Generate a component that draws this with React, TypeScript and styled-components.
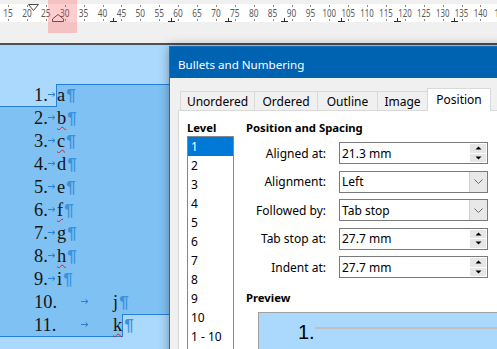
import React from 'react';
import styled, { createGlobalStyle } from 'styled-components';

const UI = `"Noto Sans", "Open Sans", sans-serif`;

const Global = createGlobalStyle`
  html, body { margin: 0; padding: 0; overflow: hidden; background: #aad9fd; }
  #root { width: 497px; height: 349px; }
`;

const Screen = styled.div`
  position: relative;
  width: 497px;
  height: 349px;
  overflow: hidden;
  display: flex;
  flex-direction: column;
  background: #aad9fd;
`;

/* ---------- Ruler ---------- */
const RulerBar = styled.div`
  position: relative;
  flex: none;
  height: 43px;
  box-sizing: border-box;
  padding-top: 4px;
  background: #f0f0f0;
`;
const RulerScale = styled.svg`
  display: block;
  width: 497px;
  height: 18px;
  background: #ffffff;
`;
const RulerHighlight = styled.div`
  position: absolute;
  left: 48px;
  top: 0;
  width: 29px;
  height: 33px;
  background: rgba(255, 70, 70, 0.27);
`;
const Divider = styled.div`
  flex: none;
  height: 2px;
  background: #4b5259;
`;

const unit = 18.9; // px per 5 mm
const numX = (mm: number) => 8 + ((mm - 15) / 5) * unit;
const marks = Array.from({ length: 26 }, (_, i) => 15 + i * 5);
const tabStops = [113, 170.5, 227.5, 284, 340.5, 397, 454];

function Ruler() {
  return (
    <RulerBar>
      <RulerScale viewBox="0 0 497 18">
        {marks.map((mm) => (
          <g key={mm}>
            <rect x={Math.round(numX(mm))} y={1} width={1} height={2} fill="#8a8a8a" />
            <rect x={Math.round(numX(mm))} y={15} width={1} height={2} fill="#8a8a8a" />
            <text
              x={numX(mm)}
              y={13}
              textAnchor="middle"
              fontFamily={UI}
              fontSize="10.5"
              fill="#595959"
              textLength={mm >= 100 ? 13.5 : 9.5}
              lengthAdjust="spacingAndGlyphs"
            >
              {mm}
            </text>
          </g>
        ))}
        <text x={494} y={13} fontFamily={UI} fontSize="10.5" fill="#595959">1</text>
        {tabStops.map((x) => (
          <g key={x} fill="#2b2b2b">
            <rect x={Math.round(x)} y={14} width={1} height={3} />
            <rect x={Math.round(x) - 3} y={17} width={7} height={1} />
          </g>
        ))}
        <polygon points="28.5,0.5 38.5,0.5 33.5,6.5" fill="#ffffff" stroke="#4a4a4a" strokeWidth="1" />
        <polygon points="58,10.5 52.5,15 52.5,17.5 63.5,17.5 63.5,15" fill="none" stroke="#4a4a4a" strokeWidth="1" />
      </RulerScale>
      <RulerHighlight />
    </RulerBar>
  );
}

/* ---------- Document ---------- */
const Doc = styled.div`
  flex: 1;
  padding-top: 39px;
  font-family: "Liberation Serif", "Times New Roman", serif;
  font-size: 18.4px;
  color: #141414;
`;
const Line = styled.div`
  display: flex;
  height: 23px;
  line-height: 23px;
  white-space: nowrap;
`;
const edgeShadow: Record<string, string> = {
  none: 'none',
  top: 'inset 0 1px 0 #2780d8',
  bottom: 'inset 0 -1px 0 #2780d8',
  topLeft: 'inset 1px 1px 0 #2780d8',
  bottomRight: 'inset -1px -1px 0 #2780d8',
};
const Segment = styled.span<{ $sel?: boolean; $grow?: boolean; $edge?: string; $pad?: number }>`
  display: flex;
  align-items: center;
  flex: ${(p) => (p.$grow ? '1' : 'none')};
  padding-left: ${(p) => p.$pad ?? 0}px;
  background: ${(p) => (p.$sel ? '#80c1f3' : 'transparent')};
  box-shadow: ${(p) => edgeShadow[p.$edge ?? 'none']};
`;
const Num = styled.span<{ $w: number }>`
  display: inline-block;
  width: ${(p) => p.$w}px;
`;
const TabGap = styled.span<{ $w: number }>`
  display: inline-flex;
  justify-content: center;
  align-items: center;
  width: ${(p) => p.$w}px;
  height: 100%;
  padding-bottom: 3px;
  box-sizing: border-box;
`;
const Letter = styled.span<{ $typo?: boolean; $tail?: number }>`
  padding-left: 1px;
  padding-right: ${(p) => p.$tail ?? 0}px;
  text-decoration: ${(p) => (p.$typo ? 'underline wavy #d8202e' : 'none')};
  text-decoration-thickness: 1.3px;
  text-underline-offset: 2px;
`;
const Pilcrow = styled.span`
  font-family: "Liberation Sans", Arial, sans-serif;
  font-size: 17px;
  font-weight: 700;
  color: #3a93dc;
  padding-left: 1px;
`;

function TabArrow() {
  return (
    <svg width="8" height="5" viewBox="0 0 8 5">
      <path d="M0 2.5H7M4.5 0.5L7 2.5L4.5 4.5" fill="none" stroke="#2a80d2" strokeWidth="1" />
    </svg>
  );
}

type Row = { n: number; l: string; typo?: boolean };
const rows: Row[] = [
  { n: 1, l: 'a' },
  { n: 2, l: 'b', typo: true },
  { n: 3, l: 'c', typo: true },
  { n: 4, l: 'd' },
  { n: 5, l: 'e' },
  { n: 6, l: 'f', typo: true },
  { n: 7, l: 'g' },
  { n: 8, l: 'h', typo: true },
  { n: 9, l: 'i' },
  { n: 10, l: 'j' },
  { n: 11, l: 'k', typo: true },
];

function DocLine({ row, first, last }: { row: Row; first: boolean; last: boolean }) {
  const wide = row.n >= 10;
  const prefix = (
    <>
      <Num $w={wide ? 23 : 14}>{row.n}.</Num>
      <TabGap $w={wide ? 55 : 8}>
        <TabArrow />
      </TabGap>
    </>
  );
  if (first) {
    return (
      <Line>
        <Segment $pad={34} $edge="bottom">{prefix}</Segment>
        <Segment $sel $grow $edge="topLeft">
          <Letter $typo={row.typo}>{row.l}</Letter>
          <Pilcrow>¶</Pilcrow>
        </Segment>
      </Line>
    );
  }
  if (last) {
    return (
      <Line>
        <Segment $sel $pad={34} $edge="bottomRight">
          {prefix}
          <Letter $typo={row.typo} $tail={1}>{row.l}</Letter>
        </Segment>
        <Segment $grow $edge="top">
          <Pilcrow>¶</Pilcrow>
        </Segment>
      </Line>
    );
  }
  return (
    <Line>
      <Segment $sel $grow $pad={34}>
        {prefix}
        <Letter $typo={row.typo}>{row.l}</Letter>
        <Pilcrow>¶</Pilcrow>
      </Segment>
    </Line>
  );
}

/* ---------- Dialog ---------- */
const Dialog = styled.section`
  position: absolute;
  left: 169px;
  top: 46px;
  width: 340px;
  height: 330px;
  display: flex;
  flex-direction: column;
  border: 1px solid #1c6fb8;
  background: #f0f0f0;
  box-shadow: 0 0 10px rgba(0, 0, 0, 0.35);
  font-family: ${UI};
  font-size: 12px;
  color: #000;
`;
const TitleBar = styled.header`
  flex: none;
  height: 31px;
  box-sizing: border-box;
  padding: 3px 0 0 8px;
  display: flex;
  align-items: center;
  background: #0063b1;
  color: #ffffff;
  font-size: 11.6px;
`;
const Body = styled.div`
  flex: 1;
  display: flex;
  flex-direction: column;
  padding: 10px 0 0 8px;
`;
const TabStrip = styled.div`
  flex: none;
  display: flex;
  align-items: flex-end;
  height: 22px;
  padding-left: 2px;
`;
const Tab = styled.div<{ $w: number; $active?: boolean }>`
  position: relative;
  z-index: ${(p) => (p.$active ? 1 : 0)};
  box-sizing: border-box;
  width: ${(p) => p.$w}px;
  height: ${(p) => (p.$active ? 23 : 19)}px;
  margin-bottom: ${(p) => (p.$active ? -1 : 0)}px;
  margin-left: -1px;
  border: 1px solid #d9d9d9;
  border-bottom: none;
  background: ${(p) => (p.$active ? '#ffffff' : '#f0f0f0')};
  display: flex;
  align-items: center;
  justify-content: center;
  padding-bottom: ${(p) => (p.$active ? 2 : 0)}px;
  &:first-child { margin-left: 0; }
`;
const Panel = styled.div`
  flex: 1;
  display: flex;
  gap: 12px;
  background: #ffffff;
  border: 1px solid #d9d9d9;
  padding: 9px 0 0 8px;
`;
const LevelCol = styled.div`
  width: 47px;
  display: flex;
  flex-direction: column;
`;
const Heading = styled.div`
  height: 16px;
  line-height: 16px;
  font-weight: 700;
  font-size: 11.3px;
  white-space: nowrap;
`;
const ListBox = styled.div`
  flex: 1;
  border: 1px solid #828790;
  background: #ffffff;
`;
const ListItem = styled.div<{ $selected?: boolean }>`
  height: 19px;
  line-height: 19px;
  padding-left: 3px;
  background: ${(p) => (p.$selected ? '#0078d7' : 'transparent')};
  color: ${(p) => (p.$selected ? '#ffffff' : '#000000')};
`;
const MainCol = styled.div`
  flex: 1;
  display: flex;
  flex-direction: column;
`;
const Form = styled.div`
  margin-top: 6px;
  display: grid;
  grid-template-columns: 80px 149px;
  grid-auto-rows: 22px;
  column-gap: 13px;
  row-gap: 6.5px;
`;
const Label = styled.div`
  align-self: center;
  text-align: right;
  white-space: nowrap;
`;
const Field = styled.div`
  box-sizing: border-box;
  display: flex;
  align-items: center;
  padding-left: 2px;
  border: 1px solid #7a7a7a;
  background: #ffffff;
  white-space: nowrap;
`;
const Spin = styled.div`
  margin-left: auto;
  margin-right: 1px;
  width: 16px;
  height: 18px;
  display: flex;
  flex-direction: column;
  gap: 1px;
`;
const SpinHalf = styled.div`
  flex: 1;
  display: flex;
  align-items: center;
  justify-content: center;
  background: #e6e6e6;
`;
const DropButton = styled.div`
  margin-left: auto;
  width: 17px;
  height: 20px;
  display: flex;
  align-items: center;
  justify-content: center;
  background: #e8e8e8;
  border-left: 1px solid #d0d0d0;
`;
const PreviewHeading = styled(Heading)`
  margin-top: 12px;
`;
const PreviewBox = styled.div`
  margin: 6px 0 0 12px;
  flex: 1;
  display: flex;
  align-items: flex-start;
  padding: 9px 0 0 39px;
  background: #aad9fd;
  border: 1px solid #a0a0a0;
`;
const PreviewNum = styled.span`
  font-family: "Liberation Sans", Arial, sans-serif;
  font-size: 20px;
  line-height: 20px;
`;
const PreviewRule = styled.div`
  flex: 1;
  height: 2px;
  margin-top: 5px;
  background: #c0c0c0;
`;

function Triangle({ up }: { up?: boolean }) {
  return (
    <svg width="7" height="4" viewBox="0 0 7 4">
      <path d={up ? 'M0.5 3.5L3.5 0.5L6.5 3.5Z' : 'M0.5 0.5L3.5 3.5L6.5 0.5Z'} fill="#000" />
    </svg>
  );
}
function Chevron() {
  return (
    <svg width="9" height="5" viewBox="0 0 9 5">
      <path d="M0.5 0.5L4.5 4.5L8.5 0.5" fill="none" stroke="#6a6a6a" strokeWidth="1" />
    </svg>
  );
}

function SpinField({ value }: { value: string }) {
  return (
    <Field>
      {value}
      <Spin>
        <SpinHalf><Triangle up /></SpinHalf>
        <SpinHalf><Triangle /></SpinHalf>
      </Spin>
    </Field>
  );
}
function SelectField({ value }: { value: string }) {
  return (
    <Field>
      {value}
      <DropButton><Chevron /></DropButton>
    </Field>
  );
}

const tabs = [
  { label: 'Unordered', w: 75 },
  { label: 'Ordered', w: 64 },
  { label: 'Outline', w: 61 },
  { label: 'Image', w: 51 },
  { label: 'Position', w: 64, active: true },
];
const levels = ['1', '2', '3', '4', '5', '6', '7', '8', '9', '10', '1 - 10'];

function BulletsDialog() {
  return (
    <Dialog>
      <TitleBar>Bullets and Numbering</TitleBar>
      <Body>
        <TabStrip>
          {tabs.map((t) => (
            <Tab key={t.label} $w={t.w} $active={t.active}>{t.label}</Tab>
          ))}
        </TabStrip>
        <Panel>
          <LevelCol>
            <Heading>Level</Heading>
            <ListBox>
              {levels.map((l, i) => (
                <ListItem key={l} $selected={i === 0}>{l}</ListItem>
              ))}
            </ListBox>
          </LevelCol>
          <MainCol>
            <Heading>Position and Spacing</Heading>
            <Form>
              <Label>Aligned at:</Label>
              <SpinField value="21.3 mm" />
              <Label>Alignment:</Label>
              <SelectField value="Left" />
              <Label>Followed by:</Label>
              <SelectField value="Tab stop" />
              <Label>Tab stop at:</Label>
              <SpinField value="27.7 mm" />
              <Label>Indent at:</Label>
              <SpinField value="27.7 mm" />
            </Form>
            <PreviewHeading>Preview</PreviewHeading>
            <PreviewBox>
              <PreviewNum>1.</PreviewNum>
              <PreviewRule />
            </PreviewBox>
          </MainCol>
        </Panel>
      </Body>
    </Dialog>
  );
}

export default function App() {
  return (
    <>
      <Global />
      <Screen>
        <Ruler />
        <Divider />
        <Doc>
          {rows.map((r, i) => (
            <DocLine key={r.n} row={r} first={i === 0} last={i === rows.length - 1} />
          ))}
        </Doc>
        <BulletsDialog />
      </Screen>
    </>
  );
}
